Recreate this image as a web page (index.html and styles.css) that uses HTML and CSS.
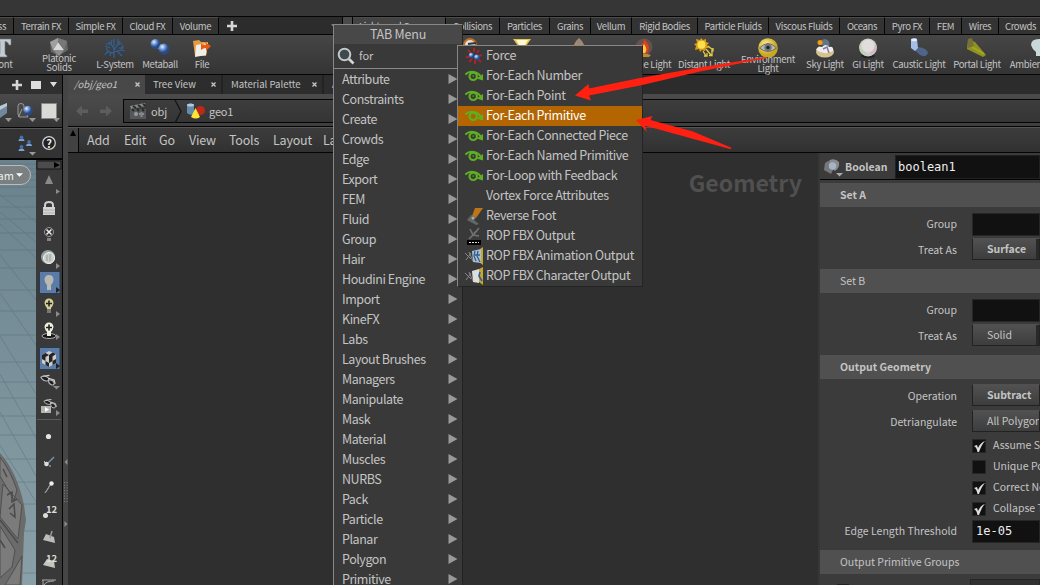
FILE: index.html
```html
<!DOCTYPE html>
<html lang="en">
<head>
<meta charset="utf-8">
<title>Network Editor</title>
<link rel="stylesheet" href="styles.css">
</head>
<body>
<svg class="defs" width="0" height="0">
  <defs>
    <radialGradient id="blue" cx=".35" cy=".3"><stop offset="0" stop-color="#e8f2ff"/><stop offset=".5" stop-color="#6f9ad6"/><stop offset="1" stop-color="#2a4a86"/></radialGradient>
    <radialGradient id="grey" cx=".4" cy=".35"><stop offset="0" stop-color="#fff"/><stop offset="1" stop-color="#999"/></radialGradient>
    <radialGradient id="yellow" cx=".4" cy=".35"><stop offset="0" stop-color="#fff6a0"/><stop offset="1" stop-color="#c9a81c"/></radialGradient>
    <symbol id="loop" viewBox="0 0 18 12"><path d="M.3 4.500Q4 1 8.500 2Q13 2.500 15.500 6" fill="none" stroke="#5fb021" stroke-width="2"/><path d="M18 4V10.500L11.500 8.500Z" fill="#5fb021"/><circle cx="8.200" cy="6.300" r="3.700" fill="none" stroke="#5fb021" stroke-width="2.200"/><circle cx="8.200" cy="6" r="1" fill="#4c8620"/></symbol>
    <symbol id="tri" viewBox="0 0 9 10"><path d="M0 0L9 5L0 10Z" fill="#999"/></symbol>
    <symbol id="drop" viewBox="0 0 8 4"><path d="M0 0H8L4 4Z" fill="#929292"/></symbol>
    <symbol id="plus" viewBox="0 0 10 10"><path d="M3.700 0H6.300V3.700H10V6.300H6.300V10H3.700V6.300H0V3.700H3.700Z" fill="#d6d6d6"/></symbol>
    <symbol id="x" viewBox="0 0 5 5"><path d="M.5 .5L4.500 4.500M4.500 .5L.5 4.500" stroke="#c8c8c8" stroke-width="1.300"/></symbol>
    <symbol id="check" viewBox="0 0 12 12"><path d="M1 6L4 5L5 8C7 4 9 2 12 1C9 4 7.500 8 6 12H4.500C4 9 3 7 1 6Z" fill="#dedede"/></symbol>
    <symbol id="specs" viewBox="0 0 18 14"><path d="M1 3Q5 0 9 4Q10 7 7 7Q3 7 1 3ZM9 6Q14 5 15 9Q15 12 12 11Q9 10 9 6Z" fill="#1e1e1e" stroke="#b9b9b9" stroke-width="1.200"/><path d="M3 2L10 1M9 4L15 6L16 10" stroke="#d0d0d0" stroke-width="1.200" fill="none"/></symbol>
  </defs>
</svg>

<div class="app">
  <div class="titlebar"></div>

  <div class="shelf-tabs">
    <div class="tab w-ss">ss</div>
    <div class="tab w-terrain">Terrain FX</div>
    <div class="tab w-simple">Simple FX</div>
    <div class="tab w-cloud">Cloud FX</div>
    <div class="tab w-volume">Volume</div>
    <div class="shelf-gap"><svg width="10" height="10"><use href="#plus"/></svg><svg width="7" height="4"><use href="#drop"/></svg></div>
    <div class="shelf-grip"></div>
    <div class="tab active w-lights">Lights and Cameras</div>
    <div class="tab w-coll">Collisions</div>
    <div class="tab w-part">Particles</div>
    <div class="tab w-grains">Grains</div>
    <div class="tab w-vellum">Vellum</div>
    <div class="tab w-rigid">Rigid Bodies</div>
    <div class="tab w-pfluid">Particle Fluids</div>
    <div class="tab w-viscous">Viscous Fluids</div>
    <div class="tab w-oceans">Oceans</div>
    <div class="tab w-pyro">Pyro FX</div>
    <div class="tab w-fem">FEM</div>
    <div class="tab w-wires">Wires</div>
    <div class="tab w-crowds">Crowds</div>
  </div>

  <div class="shelf">
    <div class="tool t-font">
      <svg width="20" height="20" viewBox="0 0 20 20"><path d="M0 1H18V7H16Q15 3.500 12 3.500V15Q12 17 14 17.500V19H5V17.500Q7 17 7 15V3.500Q3 3.500 2 7H0Z" fill="#c3ccd2" stroke="#6f777c" stroke-width=".6"/></svg>
      <span>Font</span>
    </div>
    <div class="tool t-platonic two">
      <svg width="20" height="18" viewBox="0 0 20 18"><path d="M9 0L18 3L19 12L10 18L2 14L1 4Z" fill="#666"/><path d="M9 4L15 12L4 12Z" fill="#d8d8d8"/><path d="M9 4L15 12L18 3L9 0Z" fill="#777"/><path d="M9 4L4 12L1 4L9 0Z" fill="#a0a0a0"/><path d="M4 12H15L10 18Z" fill="#8d8d8d"/></svg>
      <span>Platonic<br>Solids</span>
    </div>
    <div class="tool t-lsys">
      <svg width="22" height="20" viewBox="0 0 22 20"><path d="M10 20V10L5 4M10 12L16 3M10 8V1M10 15L3 14L1 17M5 14L2 10M10 14L17 12L21 13M17 12L19 7M7 6L2 6M7 6L8 2M13 7L18 5M14 6L14 1M13 13L18 18M6 10L1 8M15 10L20 10M7 14L6 18" fill="none" stroke="#2e629b" stroke-width="1.200"/></svg>
      <span>L-System</span>
    </div>
    <div class="tool t-meta">
      <svg width="20" height="20" viewBox="0 0 20 20"><path d="M5 5L14 12" stroke="#87a9d8" stroke-width="5"/><circle cx="5.500" cy="6" r="5" fill="url(#blue)"/><circle cx="14" cy="11" r="5.500" fill="url(#blue)"/></svg>
      <span>Metaball</span>
    </div>
    <div class="tool t-file">
      <svg width="20" height="20" viewBox="0 0 20 20"><path d="M1 3L7 2L9 4L16 4L14 18L3 18Z" fill="#e59b42"/><path d="M4 7L16 5L14 17L3 19Z" fill="#f0eee9"/><path d="M9 6L14 7L13 4L19 8L14 13V10Q11 10 9 12Z" fill="#e65c12"/></svg>
      <span>File</span>
    </div>
    <div class="tool t-cam">
      <svg width="16" height="20" viewBox="0 0 16 20"><circle cx="8" cy="7" r="6" fill="#ddd" stroke="#bd7225" stroke-width="2"/><path d="M6 6L14 5" stroke="#333" stroke-width="2"/></svg>
    </div>
    <div class="tool t-spot">
      <svg width="20" height="20" viewBox="0 0 20 20"><path d="M1 1H19L14 8H6Z" fill="#e7c64e"/><path d="M4 2H16L13 7H7Z" fill="#fff9d0"/></svg>
    </div>
    <div class="tool t-area">
      <svg width="14" height="20" viewBox="0 0 14 20"><path d="M7 0Q14 6 11 11H3Q0 6 7 0" fill="#bd8a3f"/><circle cx="7" cy="4" r="2.500" fill="#8b8999"/></svg>
    </div>
    <div class="tool t-vol">
      <svg width="20" height="20" viewBox="0 0 20 20"><circle cx="10" cy="9" r="8.500" fill="#65514d"/><path d="M10 1Q17 8 14 14Q10 18 5 14Q3 9 7 7Q10 5 10 1" fill="#e04318"/><path d="M10 6Q14 11 11 15H7Q5 12 8 10Z" fill="#ffcb44"/><path d="M3 17Q10 14 17 17L15 19H5Z" fill="#ba8b34"/></svg>
      <span>Volume Light</span>
    </div>
    <div class="tool t-dist">
      <svg width="20" height="20" viewBox="0 0 20 20"><path d="M7 0L9 2L12 1L12 4L15 5L13 7L15 10L12 10L11 13L8 12L6 14L5 11L1 12L2 8L0 6L3 5L2 1L6 2Z" fill="#dc9b16"/><circle cx="7.500" cy="6.800" r="4" fill="#ffe14e"/><path d="M9 13L12 18M12 11L17 17M14 8L19 12M10 18H13V15M15 17.500H18V14M17 13H19V10" fill="none" stroke="#e5cb43" stroke-width="1.300"/></svg>
      <span>Distant Light</span>
    </div>
    <div class="tool t-env two">
      <svg width="20" height="19" viewBox="0 0 20 19"><circle cx="10" cy="10" r="9.800" fill="url(#yellow)"/><path d="M1.500 10Q10 1 18.500 10Q10 17 1.500 10Z" fill="#b9b8ad" stroke="#6f6d61" stroke-width="1"/><circle cx="10" cy="9.500" r="3.700" fill="#707781"/><circle cx="10" cy="9.500" r="1.700" fill="#222"/></svg>
      <span>Environment<br>Light</span>
    </div>
    <div class="tool t-sky">
      <svg width="20" height="20" viewBox="0 0 20 20"><path d="M6 7Q5 1 10 1Q16 2 14 9Z" fill="#607683"/><circle cx="5" cy="4.500" r="2.500" fill="#f49b10"/><ellipse cx="10" cy="14" rx="9" ry="5.500" fill="#d6c28a"/><path d="M1 12Q3 7 7 9Q11 5 14 9Q19 8 18 13Q10 18 1 12Z" fill="#eeeaf0"/><path d="M8 11L12 9L14 15" stroke="#847b9b" stroke-width="1.500" fill="none"/></svg>
      <span>Sky Light</span>
    </div>
    <div class="tool t-gi">
      <svg width="20" height="20" viewBox="0 0 20 20"><ellipse cx="10" cy="18" rx="7" ry="2" fill="#242424"/><circle cx="10" cy="9.500" r="9" fill="#cfcdcb"/><path d="M1.500 7Q1 14 7 17.500L10 9Z" fill="#bfd3b4"/><path d="M18 6Q20 14 13 17L10 9Z" fill="#d3b9bf"/><circle cx="10" cy="8" r="6.500" fill="#e0dedc"/></svg>
      <span>GI Light</span>
    </div>
    <div class="tool t-caustic">
      <svg width="20" height="20" viewBox="0 0 20 20"><path d="M9 9Q18 10 19 15Q17 20 11 17L4 11Z" fill="#526e9b" opacity=".8"/><path d="M2 1Q6 -1 8 1L9 10L6 13L2 10Z" fill="#a6bfe6"/><ellipse cx="5" cy="2" rx="3" ry="1.300" fill="#e6efff"/></svg>
      <span>Caustic Light</span>
    </div>
    <div class="tool t-portal">
      <svg width="20" height="20" viewBox="0 0 20 20"><path d="M1 1L8 4L19 17L16 19L0 11Z" fill="#8f921e"/><path d="M1 1L5 0L7 8L1 10Z" fill="#78703a"/><path d="M5 9L17 16" stroke="#a3a52d" stroke-width="2"/></svg>
      <span>Portal Light</span>
    </div>
    <div class="tool t-ambient">
      <svg width="20" height="20" viewBox="0 0 20 20"><path d="M2 7Q2 1 10 1Q18 1 18 7Q17 11 13 14V18H7V14Q3 11 2 7Z" fill="#c9d9d9"/></svg>
      <span>Ambient Light</span>
    </div>
  </div>

  <div class="workspace">
    <div class="left">
      <div class="left-tabs">
        <svg width="10" height="10"><use href="#plus"/></svg><i class="pane-box"></i><svg width="7" height="5" viewBox="0 0 8 4" preserveAspectRatio="none"><path d="M0 0H8L4 4Z" fill="#ddd"/></svg>
      </div>
      <div class="left-tools">
        <svg width="62" height="33" viewBox="0 0 62 33"><path d="M0 12L7 9V19L0 24Z" fill="#71879d"/><path d="M0 12L7 9V12L0 16Z" fill="#b7c9d6"/><path d="M18 20V12Q18 9.500 21 9.500Q24 9.500 24 12V15L28 23H19Z" fill="#484848" stroke="#999"/><path d="M22 15L18.500 23" stroke="#999"/><circle cx="28" cy="16.500" r="4.800" fill="url(#blue)"/><path d="M41.500 9.500H56.500V24.500H41.500Z" fill="#d9d9d6" stroke="#888"/><path d="M5 24H12L8.500 28ZM29 24H36L32.500 28ZM53 24H60L56.500 28Z" fill="#969696"/></svg>
      </div>
      <div class="left-options">
        <svg width="62" height="30" viewBox="0 0 62 30"><path d="M18.500 12Q18.500 9.500 21.500 9.500Q24.500 9.500 24.500 12ZM18.500 22Q18.500 19.500 21.500 19.500Q24.500 19.500 24.500 22ZM26 17Q26 14.500 29 14.500Q32 14.500 32 17Z" fill="#7ca3d6"/><g fill="#456fa9"><circle cx="21.500" cy="8.500" r="1.900"/><circle cx="21.500" cy="18" r="1.900"/><circle cx="29" cy="13" r="1.900"/></g><path d="M29 23H36L32.500 26.500Z" fill="#999"/><circle cx="49" cy="14" r="6.300" fill="#222" stroke="#d0d0d0" stroke-width="1.300"/></svg>
        <b class="help">?</b>
      </div>
      <div class="view-row">
        <div class="viewport">
          <svg width="36" height="425" viewBox="0 0 36 425">
            <g stroke="#566d75" stroke-width=".8" opacity=".55"><path d="M0 4H36M0 9H36M0 14H36M0 20H36M0 27H36M0 36H36M0 47H36M0 59H36M0 73H36M0 90H36M0 108H36M0 130H36M0 151H36M0 175H36M0 202H36M0 222H36M0 238H36M0 256H36M0 275H36M0 299H36M0 322H36M0 344H36M0 371H36M0 413H36M0 35L36 62M0 64L36 98M0 95L36 140M0 133L36 185M0 176L36 234M0 214L36 278M0 252L36 316M0 52L36 82M0 285L36 342"/></g>
            <path d="M0 293Q17 312 24 345L26 360L24 373L22 425H0Z" fill="#6b6b6b"/>
            <path d="M0 297Q10 310 17 330L14 340L0 316ZM3 324L22 345L18 379L0 357ZM0 366L15 390L12 407L0 418ZM14 410L22 396L20 425H5Z" fill="#7b7b7b" stroke="#505050"/>
            <path d="M7 335L12 332L12 342L17 339M9 349L14 344L15 357L10 353M0 380L5 388M3 309L7 317" fill="none" stroke="#4a4a4a" stroke-width="1.500"/>
            <path d="M0 360L18 383" stroke="#4b4b4b" stroke-width="1.500"/>
          </svg>
          <div class="cam">am<svg width="7" height="4" viewBox="0 0 8 4"><path d="M0 0H8L4 4Z" fill="#fff"/></svg></div>
        </div>
        <div class="vtools">
          <svg width="26" height="425" viewBox="0 0 26 425">
            <path d="M1 1H25V9H1Z" fill="#4c4c4c" stroke="#171717"/><path d="M18 2L24 5L18 8Z" fill="#000"/>
            <path d="M9 24L13 15L17 24Z" fill="#8a8a8a"/>
            <path d="M9 47V45Q9 42 13 42Q17 42 17 45V47" fill="none" stroke="#cecece" stroke-width="2"/><path d="M7 47H19V55H7Z" fill="#d4d4d0"/><path d="M7 50H19M7 53H19" stroke="#b0b0b0"/>
            <circle cx="13" cy="72" r="4.500" fill="#303030" stroke="#999"/><path d="M10.500 69.500L15.500 74.500M15.500 69.500L10.500 74.500" stroke="#eee" stroke-width="1.500"/><path d="M11 78H15V81H11Z" fill="#858585"/>
            <circle cx="12" cy="97" r="7" fill="#90a19c"/><circle cx="13" cy="98" r="5.500" fill="#c9cecb" stroke="#f2f2f2"/><path d="M11 95V101M14 94V101" stroke="#949c99"/>
            <path d="M3.500 111.500H24V133.500H3.500Z" fill="#5a7ca7" stroke="#2a3b50"/>
            <path d="M8.500 120Q8.500 115 13 115Q17.500 115 17.500 120Q17 123 15 125V130H11V125Q9 123 8.500 120Z" fill="#b9b9b1"/>
            <path d="M8.500 143Q9 138.500 13 138.500Q17 138.500 17.500 143Q17 146 15 148V152H11V148Q9 146 8.500 143Z" fill="#d4d196"/><path d="M10 143.500H16M13 140.500V146.500" stroke="#27271c" stroke-width="1.600"/><path d="M11 149H15V153H11Z" fill="#777"/>
            <ellipse cx="13" cy="176" rx="7" ry="2.500" fill="#171717" stroke="#b0b0b0"/><path d="M8.500 167Q9 162.500 13 162.500Q17 162.500 17.500 167Q17 170 15 172V176H11V172Q9 170 8.500 167Z" fill="#f1f1df"/><path d="M10 167.500H16M13 164.500V170.500" stroke="#222" stroke-width="1.600"/>
            <path d="M3.500 187.500H24V209.500H3.500Z" fill="#5a7ca7" stroke="#2a3b50"/>
            <path d="M6 195L13 191L20 194V203L13 207L6 203Z" fill="#ccc"/><path d="M6 195L9.500 193L13 195L9.500 197V201L6 199ZM13 195L16.500 192.500L20 194L16.500 196.500V201L13 203V198.500ZM9.500 201L13 203V207L9.500 205ZM16.500 201L20 199V203L16.500 205Z" fill="#252525"/>
            <use href="#specs" x="4" y="214" width="17" height="14"/>
            <use href="#specs" x="7" y="238" width="15" height="13"/><path d="M5 246H15V253H5Z" fill="#b5b5b0"/><path d="M9 247L13 249.500L9 252Z" fill="#fff"/>
            <path d="M17 226H24L20.500 229.500Z" fill="#8c8c8c"/>
            <g fill="#8c8c8c"><path d="M20 29L24 31.500L20 34ZM20 103L24 106L20 109ZM20 151L24 154L20 157ZM20 174L24 177L20 180ZM20 250L24 253L20 256Z"/></g><path d="M20 127L24 130L20 133ZM20 203L24 206L20 209Z" fill="#222"/>
            <path d="M1 259.500H25" stroke="#5b5b5b"/>
            <circle cx="12.500" cy="276.500" r="2.600" fill="#e5e5dc"/>
            <path d="M11 304L18 297" stroke="#7d93a1" stroke-width="1.500"/><circle cx="10.500" cy="304" r="2.300" fill="#ddd"/><path d="M8.500 301V303M13 306H15" stroke="#bbb"/>
            <path d="M14 325L9 333L12 329Z" stroke="#999" fill="#ddd"/><circle cx="15.500" cy="323.500" r="2.200" fill="#eee"/>
            <circle cx="9.500" cy="355.500" r="2.500" fill="#deded4"/>
            <path d="M10 374L18 377L19 383L7 380Z" fill="#bcbcb9"/><path d="M16 371L14 378" stroke="#999" stroke-width="1.500"/>
            <path d="M11 399L18 401L19 408L7 405Z" fill="#c6c6bd"/>
            <path d="M6 420H20M7 420V425M8 425Q10 421 18 421" stroke="#aaa" fill="none"/>
            <text x="10" y="353" class="num">12</text><text x="10" y="402" class="num">12</text>
          </svg>
        </div>
      </div>
    </div>

    <div class="divider">
      <svg width="6" height="510" viewBox="0 0 6 510"><path d="M4.500 384L1.500 387L4.500 390ZM1.500 446L4.500 449L1.500 452Z" fill="#8b8b8b"/><path d="M1.500 407V428M4 407V428" stroke="#858585" stroke-dasharray="1 1.700"/></svg>
    </div>

    <div class="main">
      <div class="pane-tabs">
        <div class="ptab on p-obj"><em>/obj/geo1</em><svg width="5" height="5"><use href="#x"/></svg></div>
        <div class="ptab p-tree">Tree View<svg width="5" height="5"><use href="#x"/></svg></div>
        <div class="ptab p-mat">Material Palette<svg width="5" height="5"><use href="#x"/></svg></div>
        <div class="ptab p-asset">Asset Browser</div>
      </div>
      <div class="path-row">
        <svg class="nav" width="55" height="33" viewBox="0 0 55 33"><g fill="#5d5d5d"><path d="M8 17L14 11.500V15.500H20V19H14V22.500ZM44 17L38 11.500V15.500H32V19H38V22.500Z"/></g></svg>
        <div class="path">
          <svg width="18" height="18" viewBox="0 0 18 18"><path d="M1 7H17V17H1Z" fill="#53595a"/><path d="M1 4L16 1L17 4L2 7Z" fill="#888"/><path d="M4 4L7 6M9 3L12 5M14 2L17 4M3 7L5 9M8 7L10 9M13 7L15 9" stroke="#292929" stroke-width="2"/><circle cx="7" cy="12" r="2" fill="#999"/><path d="M10 12H15M12.500 10V15" stroke="#888" stroke-width="2"/></svg>
          <span class="s-obj">obj</span>
          <svg width="8" height="23" viewBox="0 0 8 23"><path d="M1 0L7 11.500L1 23" fill="none" stroke="#151515" stroke-width="1.300"/></svg>
          <svg class="geo" width="18" height="16" viewBox="0 0 18 16"><path d="M0 2Q4 -1 7 2V11Q3 13 0 10Z" fill="#638bae"/><ellipse cx="3.500" cy="2" rx="3.500" ry="1.500" fill="#b0cae0"/><circle cx="13.500" cy="7.500" r="4.500" fill="#bd2819"/><path d="M8.500 5L13 14Q9 17 4 14Z" fill="#ffe635"/></svg>
          <span>geo1</span>
        </div>
      </div>
      <div class="menu-row">
        <div class="collapse"><svg width="6" height="6" viewBox="0 0 6 6"><path d="M0 6L3 0L6 6Z" fill="#000"/></svg></div>
        <span class="m1">Add</span><span class="m2">Edit</span><span class="m3">Go</span><span class="m4">View</span><span class="m5">Tools</span><span class="m6">Layout</span><span>Labs</span>
      </div>
      <div class="body-row">
        <div class="network"><div class="context">Geometry</div></div>
        <div class="params">
          <div class="node-head">
            <svg width="20" height="20" viewBox="0 0 20 20"><path d="M2 6L7 3L12 9L8 17L1 13Z" fill="#777"/><path d="M7 3Q12 1 16 5Q17 11 12 14L7 10Z" fill="#8b8b8b"/><circle cx="9.500" cy="9" r="3.700" fill="#a4b4c7"/><path d="M13 16H20L16.500 19.500Z" fill="#aaa"/></svg>
            <b>Boolean</b><div class="name">boolean1</div>
          </div>
          <div class="section"><b>Set A</b></div>
          <div class="group">
            <div class="row r-field"><label>Group</label><div class="field"></div></div>
            <div class="row r-btn"><label>Treat As</label><div class="btn split"><b>Surface</b></div></div>
          </div>
          <div class="section">Set B</div>
          <div class="group">
            <div class="row r-field"><label>Group</label><div class="field"></div></div>
            <div class="row r-btn"><label>Treat As</label><div class="btn split">Solid</div></div>
          </div>
          <div class="section"><b>Output Geometry</b></div>
          <div class="group out">
            <div class="row r-btn"><label>Operation</label><div class="btn"><b>Subtract</b></div></div>
            <div class="row r-btn"><label>Detriangulate</label><div class="btn">All Polygons</div></div>
            <div class="row r-check"><label></label><i class="box"><svg width="12" height="12"><use href="#check"/></svg></i><span>Assume Self-Intersections</span></div>
            <div class="row r-check"><label></label><i class="box"></i><span>Unique Points</span></div>
            <div class="row r-check"><label></label><i class="box"><svg width="12" height="12"><use href="#check"/></svg></i><span>Correct Normals</span></div>
            <div class="row r-check"><label></label><i class="box"><svg width="12" height="12"><use href="#check"/></svg></i><span>Collapse Tiny Edges</span></div>
            <div class="row r-field last"><label>Edge Length Threshold</label><div class="field">1e-05</div></div>
          </div>
          <div class="section">Output Primitive Groups</div>
          <div class="tail"><i></i><div></div></div>
        </div>
      </div>
    </div>
  </div>

  <div class="tab-menu">
    <div class="tm-title">TAB Menu</div>
    <div class="tm-search"><svg width="18" height="18" viewBox="0 0 18 18"><circle cx="7.500" cy="7.500" r="5.800" fill="#3e4a4e" stroke="#c4c8c8" stroke-width="2"/><path d="M12 12L16.500 16.500" stroke="#d5d5d5" stroke-width="2.600"/></svg><span>for</span></div>
    <ul>
      <li>Attribute<svg><use href="#tri"/></svg></li>
      <li>Constraints<svg><use href="#tri"/></svg></li>
      <li>Create<svg><use href="#tri"/></svg></li>
      <li>Crowds<svg><use href="#tri"/></svg></li>
      <li>Edge<svg><use href="#tri"/></svg></li>
      <li>Export<svg><use href="#tri"/></svg></li>
      <li>FEM<svg><use href="#tri"/></svg></li>
      <li>Fluid<svg><use href="#tri"/></svg></li>
      <li>Group<svg><use href="#tri"/></svg></li>
      <li>Hair<svg><use href="#tri"/></svg></li>
      <li>Houdini Engine<svg><use href="#tri"/></svg></li>
      <li>Import<svg><use href="#tri"/></svg></li>
      <li>KineFX<svg><use href="#tri"/></svg></li>
      <li>Labs<svg><use href="#tri"/></svg></li>
      <li>Layout Brushes<svg><use href="#tri"/></svg></li>
      <li>Managers<svg><use href="#tri"/></svg></li>
      <li>Manipulate<svg><use href="#tri"/></svg></li>
      <li>Mask<svg><use href="#tri"/></svg></li>
      <li>Material<svg><use href="#tri"/></svg></li>
      <li>Muscles<svg><use href="#tri"/></svg></li>
      <li>NURBS<svg><use href="#tri"/></svg></li>
      <li>Pack<svg><use href="#tri"/></svg></li>
      <li>Particle<svg><use href="#tri"/></svg></li>
      <li>Planar<svg><use href="#tri"/></svg></li>
      <li>Polygon<svg><use href="#tri"/></svg></li>
      <li>Primitive<svg><use href="#tri"/></svg></li>
    </ul>
  </div>

  <ul class="submenu">
    <li><svg viewBox="0 0 18 18"><path d="M3 3L6 6M9 1V5M14 3L12 6M1 10H5M4 15L7 12M10 17V13M16 15L13 12M17 8L14 9" stroke="#b02222" stroke-width="2"/><circle cx="6.500" cy="8.500" r="2.800" fill="url(#blue)"/><circle cx="12" cy="10.500" r="3" fill="url(#blue)"/></svg><span>Force</span></li>
    <li><svg class="lp"><use href="#loop"/></svg><span>For-Each Number</span></li>
    <li><svg class="lp"><use href="#loop"/></svg><span>For-Each Point</span></li>
    <li class="hot"><svg class="lp"><use href="#loop"/></svg><span>For-Each Primitive</span></li>
    <li><svg class="lp"><use href="#loop"/></svg><span>For-Each Connected Piece</span></li>
    <li><svg class="lp"><use href="#loop"/></svg><span>For-Each Named Primitive</span></li>
    <li><svg class="lp"><use href="#loop"/></svg><span>For-Loop with Feedback</span></li>
    <li><svg></svg><span>Vortex Force Attributes</span></li>
    <li><svg viewBox="0 0 18 18"><path d="M10 1H18L11 11L7 9Z" fill="#bc7519"/><path d="M6 8L11 11L9 13L14 17L11 18L2 13Z" fill="#606865"/><circle cx="8" cy="11" r="1.500" fill="#aaa"/></svg><span>Reverse Foot</span></li>
    <li><svg viewBox="0 0 18 18"><path d="M5 2L8 8L14 1M8 8L4 12M8 8L14 9M9 6L12 4" stroke="#717171" stroke-width="1.600" fill="none"/><path d="M2 13H16V18H2Z" fill="#000"/><path d="M4 15.500H14" stroke="#ddd" stroke-dasharray="2 1"/></svg><span>ROP FBX Output</span></li>
    <li><svg viewBox="0 0 18 18"><path d="M15 2L18 0V18L14 15Z" fill="#c5a72d"/><path d="M7 4L16 2V16L8 15Z" fill="#a9bfd0"/><path d="M0 6L6 12M6 6L1 13M4 5L8 14" stroke="#888"/><path d="M10 4L9 9L11 14M13 4L12 9L15 15M10 8H15" stroke="#315d91" stroke-width="1.300" fill="none"/></svg><span>ROP FBX Animation Output</span></li>
    <li><svg viewBox="0 0 18 18"><path d="M14 2L18 0V18L14 15Z" fill="#c5a72d"/><path d="M7 4L14 2V16L8 15Z" fill="#dedede"/><path d="M0 6L6 12M6 6L1 13M4 5L8 14" stroke="#888"/><path d="M15 5L14 9L17 14" stroke="#315d91" stroke-width="1.600" fill="none"/></svg><span>ROP FBX Character Output</span></li>
  </ul>

  <svg class="arrows" width="170" height="100" viewBox="570 55 170 100"><path d="M575 95.500L588.500 84L589 88.500L640 78L700 67.500L766 57L767 58L700 71.500L640 85.500L589 95.500L591 100.500Z" fill="#ff2012"/><path d="M636 120L652.500 116L650.500 120L693 131.500L732 148L730 149L690 138L650 127L645 126.500L647 132Z" fill="#ff2012"/></svg>
</div>
</body>
</html>
```
FILE: styles.css
```css
* { box-sizing: border-box; }
body {
  margin: 0;
  background: #2f2f2f;
  color: #c4c4c4;
  font: 12px/16px "Noto Sans CJK SC", "Noto Sans", sans-serif;
}
.defs { position: absolute; }
svg { flex: none; display: block; }
ul { list-style: none; margin: 0; padding: 0; }
.app {
  position: relative;
  width: 1040px;
  height: 585px;
  overflow: hidden;
  display: flex;
  flex-direction: column;
}
.titlebar { height: 17px; flex: none; background: #363636; border-bottom: 1px solid #050505; }

/* shelf tabs */
.shelf-tabs { height: 18px; flex: none; display: flex; background: #2c2c2c; border-bottom: 1px solid #050505; font-size: 9.5px; line-height: 17px; letter-spacing: -.36px; }
.tab { flex: none; text-align: center; white-space: nowrap; overflow: hidden; background: #333; border-right: 1px solid #050505; border-top: 1px solid #4c4c4c; }
.tab.active { background: #444; text-align: left; padding-left: 6px; }
.w-ss { width: 14px; direction: rtl; padding-right: 7px; }
.w-terrain { width: 55px; } .w-simple { width: 54px; } .w-cloud { width: 50px; } .w-volume { width: 46px; }
.shelf-gap { width: 124px; flex: none; display: flex; align-items: center; justify-content: space-between; padding: 0 4px 0 8px; border-right: 1px solid #050505; }
.shelf-grip { width: 10px; flex: none; background: #4a4a4a; border-right: 1px solid #050505; }
.w-lights { width: 93px; } .w-coll { width: 54px; } .w-part { width: 50px; } .w-grains { width: 41px; }
.w-vellum { width: 41px; } .w-rigid { width: 66px; } .w-pfluid { width: 71px; } .w-viscous { width: 71px; }
.w-oceans { width: 45px; } .w-pyro { width: 45px; } .w-fem { width: 32px; } .w-wires { width: 37px; } .w-crowds { width: 44px; }

/* shelf tools */
.shelf { height: 40px; flex: none; display: flex; background: linear-gradient(#464646, #343434); border-bottom: 1px solid #050505; font-size: 9.5px; line-height: 10px; letter-spacing: -.3px; }
.tool { flex: none; display: flex; flex-direction: column; align-items: center; padding-top: 3px; text-align: center; white-space: nowrap; }
.tool span { height: 10px; margin-top: 1px; }
.tool.two span { line-height: 9px; margin-top: -2px; }
.t-font { width: 36px; margin-left: -15px; }
.t-platonic { width: 76px; }
.t-lsys { width: 36px; }
.t-meta { width: 54px; }
.t-file { width: 30px; }
.t-cam { width: 16px; margin-left: 245px; }
.t-spot { width: 20px; margin-left: 34px; }
.t-area { width: 14px; margin-left: 40px; }
.t-vol { width: 60px; margin-left: 28px; }
.t-dist { width: 60px; }
.t-env { width: 68px; }
.t-sky { width: 46px; }
.t-gi { width: 40px; }
.t-caustic { width: 62px; }
.t-portal { width: 54px; }
.t-ambient { width: 70px; }

.workspace { flex: 1; min-height: 0; display: flex; }

/* scene view */
.left { width: 62px; flex: none; display: flex; flex-direction: column; }
.left-tabs { height: 19px; display: flex; align-items: center; gap: 9px; padding-left: 12px; background: #303030; }
.pane-box { width: 10px; height: 8px; background: #ddd; }
.left-tools { height: 34px; background: linear-gradient(#4a4a4a, #353535); border-bottom: 1px solid #050505; }
.left-options { height: 32px; position: relative; background: #333; border-top: 1px solid #555; border-bottom: 2px solid #050505; }
.help { position: absolute; left: 44px; top: 6px; width: 10px; text-align: center; color: #eee; font-size: 11px; }
.view-row { flex: 1; display: flex; min-height: 0; }
.viewport { width: 36px; position: relative; overflow: hidden; background: linear-gradient(#6a828c, #89a0a8); }
.cam { position: absolute; right: 5px; top: 5px; width: 50px; height: 20px; border: 1px solid #bbb; border-radius: 10px; background: #7a7f81; color: #eee; display: flex; justify-content: flex-end; align-items: center; gap: 2px; padding-right: 7px; font-size: 11px; }
.vtools { width: 26px; background: #393939; }
.num { font: bold 9.5px "Noto Sans CJK SC", sans-serif; fill: #ddd; }
.divider { width: 6px; flex: none; background: #454545; border-left: 1px solid #050505; }

/* network editor */
.main { flex: 1; min-width: 0; display: flex; flex-direction: column; }
.pane-tabs { height: 19px; flex: none; display: flex; background: #2c2c2c; font-size: 9.6px; line-height: 19px; }
.ptab { flex: none; display: flex; align-items: center; justify-content: space-between; padding: 0 5px 0 8px; background: #2d2d2d; border-right: 2px solid #232323; white-space: nowrap; }
.ptab.on { background: #484848; border-right: 0; padding-left: 6px; }
.p-obj { width: 77px; } .p-tree { width: 78px; } .p-mat { width: 101px; } .p-asset { width: 90px; }
.path-row { height: 33px; flex: none; display: flex; background: linear-gradient(#4a4a4a 0 4px, #414141 29px, #3c3c3c); border-bottom: 1px solid #050505; }
.path { flex: 1; height: 24px; margin-top: 5px; display: flex; align-items: center; border: 1px solid #050505; border-right: 0; background: linear-gradient(#3d3d3d, #353535); padding-left: 5px; font-size: 11px; letter-spacing: -.15px; }
.s-obj { width: 23px; margin-left: 4px; }
.geo { margin: 0 4px 0 5px; }
.menu-row { height: 26px; flex: none; display: flex; align-items: center; background: linear-gradient(#3c3c3c, #313131); border-top: 1px solid #555; border-bottom: 1px solid #050505; font-size: 12.5px; letter-spacing: -.2px; }
.menu-row span { flex: none; }
.collapse { width: 11px; height: 24px; border-right: 1px solid #050505; background: #424242; padding: 2px; margin-right: 8px; }
.m1 { width: 37px; } .m2 { width: 35px; } .m3 { width: 30px; } .m4 { width: 40px; } .m5 { width: 44px; } .m6 { width: 50px; }
.body-row { flex: 1; display: flex; min-height: 0; }
.network { width: 750px; flex: none; background: #2f2f2f; }
.context { width: 734px; padding-top: 16px; text-align: right; font-size: 23.1px; line-height: 26px; font-weight: bold; color: #505050; }

/* parameters */
.params { flex: 1; min-width: 0; background: #3b3b3b; border-left: 2px solid #373737; font-size: 10.5px; }
.node-head { height: 27px; display: flex; align-items: center; border-bottom: 1px solid #050505; padding-left: 3px; }
.node-head svg { margin-top: 2px; }
.node-head b { width: 50px; margin-left: 2px; padding-top: 1px; }
.name { flex: 1; height: 24px; margin-top: 2px; background: #111; border: 1px solid #202020; padding: 3px 2px; font: 12px/16px "DejaVu Sans Mono", monospace; color: #eee; }
.section { height: 24px; line-height: 24px; padding-left: 20px; background: #505050; }
.node-head + .section { margin-top: 3px; }
.group { height: 62px; padding-top: 6px; }
.group.out { height: 171px; padding-top: 5px; }
.row { display: flex; align-items: center; }
.row label { width: 138px; flex: none; text-align: right; padding-right: 1px; margin-right: 14px; white-space: nowrap; }
.row > :last-child { flex: 1; white-space: nowrap; }
.r-field { height: 23px; }
.r-field label { padding-bottom: 2px; }
.r-btn { height: 22px; margin-top: 2px; }
.r-btn label { padding-top: 2px; }
.out .r-btn { margin: 0 0 4px; }
.field { height: 23px; background: #111; border: 1px solid #262626; font: 12px/21px "DejaVu Sans Mono", monospace; color: #eee; padding-left: 3px; }
.btn { height: 22px; border: 1px solid #222; border-top-color: #505050; background: linear-gradient(#515151, #3d3d3d); padding-left: 14px; line-height: 19px; overflow: hidden; }
.split { background: linear-gradient(90deg, transparent 63px, #292929 63px), linear-gradient(#515151, #3d3d3d); }
.r-check { height: 21px; }
.r-check span { margin-top: -4px; }
.row .box { width: 14px; height: 14px; flex: none; background: #111; border: 1px solid #262626; margin-right: 7px; margin-top: -2px; }
.tail { display: flex; padding: 5px 0 0 17px; }
.tail i { width: 14px; height: 14px; margin-top: 5px; background: #222; }
.tail div { width: 80px; margin-left: 121px; height: 20px; background: #303030; border: 1px solid #262626; }

/* TAB menu */
.tab-menu { position: absolute; left: 333px; top: 24px; width: 130px; height: 561px; overflow: hidden; background: #393939; border: solid #888; border-width: 1px 0 0 1px; border-right: 1px solid #222; font-size: 12.5px; letter-spacing: -.45px; }
.tm-title { height: 19px; line-height: 18px; text-align: center; background: #484848; letter-spacing: -.2px; }
.tm-search { height: 25px; display: flex; align-items: center; gap: 4px; padding-left: 3px; border-bottom: 1px solid #888; margin-bottom: 1px; font-size: 11px; letter-spacing: 0; }
.tm-search span { margin-top: -2px; }
.tab-menu li { height: 20px; line-height: 18px; padding: 0 4px 2px 8px; display: flex; align-items: center; justify-content: space-between; }
.tab-menu li svg { width: 10px; height: 10px; }
.submenu { position: absolute; left: 457px; top: 45px; width: 186px; height: 242px; background: #393939; border: solid #888; border-width: 1px 0 0 1px; border-right: 1px solid #242424; border-bottom: 1px solid #242424; font-size: 12.5px; letter-spacing: -.41px; }
.submenu li { height: 20px; line-height: 18px; display: flex; align-items: center; gap: 3px; padding-left: 7px; white-space: nowrap; }
.submenu li svg { width: 18px; height: 18px; }
.submenu li span { padding-bottom: 2px; }
.submenu li .lp { height: 12px; }
.submenu .hot { background: #b26500; color: #fff; }
.arrows { position: absolute; left: 570px; top: 55px; overflow: visible; }
```
